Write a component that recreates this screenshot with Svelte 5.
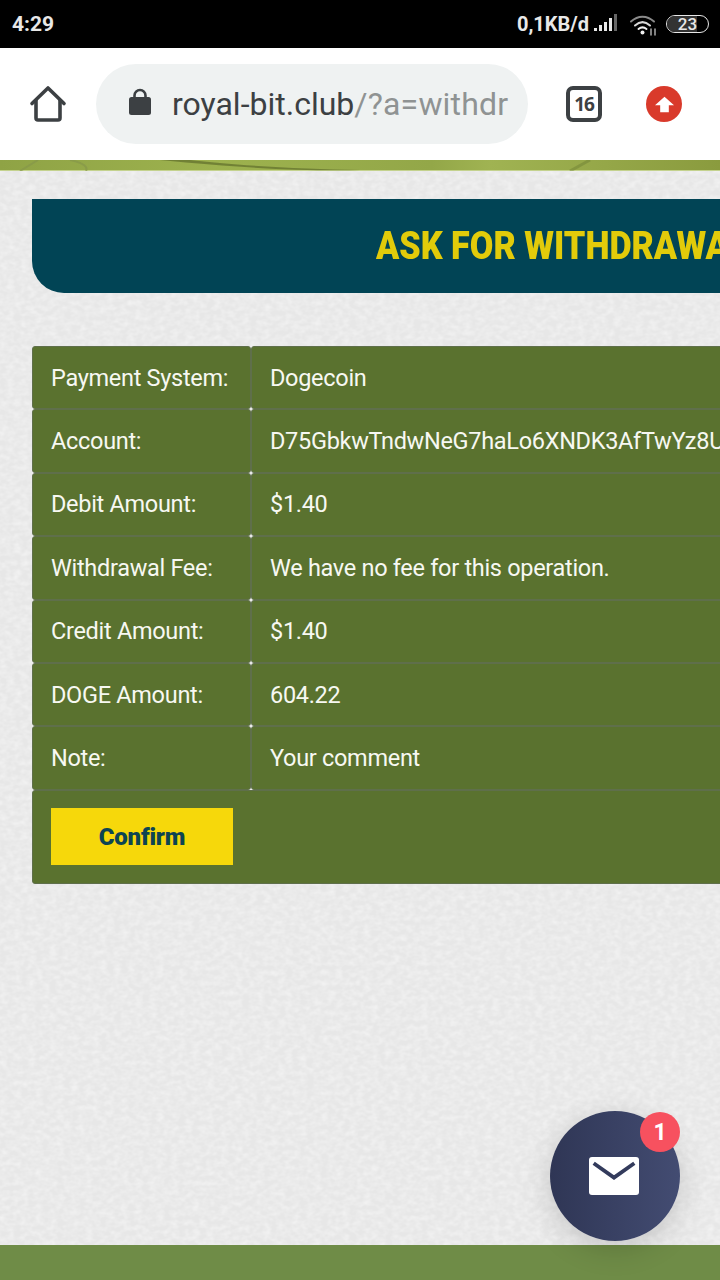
<script>
  const rows = [
    ['Payment System:', 'Dogecoin'],
    ['Account:', 'D75GbkwTndwNeG7haLo6XNDK3AfTwYz8UjR4'],
    ['Debit Amount:', '$1.40'],
    ['Withdrawal Fee:', 'We have no fee for this operation.'],
    ['Credit Amount:', '$1.40'],
    ['DOGE Amount:', '604.22'],
    ['Note:', 'Your comment']
  ];
</script>

<div class="screen">
  <div class="statusbar">
    <span class="time">4:29</span>
    <div class="status-right">
      <span class="speed">0,1KB/d</span>
      <svg class="signal" width="26" height="20" viewBox="0 0 26 20">
        <rect x="1" y="15" width="3" height="3" fill="#e8e8e8" />
        <rect x="6" y="12" width="3" height="6" fill="#e8e8e8" />
        <rect x="11" y="9" width="3" height="9" fill="#e8e8e8" />
        <rect x="16" y="5" width="3" height="13" fill="#e8e8e8" />
        <rect x="21" y="1" width="3" height="17" fill="#666" />
      </svg>
      <svg class="wifi" width="28" height="22" viewBox="0 0 28 22" fill="none" stroke-linecap="round">
        <path d="M2 7.5C9 1 18 1 25 7.5" stroke="#8a8a8a" stroke-width="2" />
        <path d="M6 11.5C11 7 16 7 21 11.5" stroke="#d8d8d8" stroke-width="2" />
        <path d="M9.5 15C12 13 15 13 17.5 15" stroke="#f0f0f0" stroke-width="2" />
        <circle cx="13.5" cy="18.5" r="2" fill="#f0f0f0" />
        <path d="M22 15v6M26 15v6" stroke="#aaa" stroke-width="1.5" />
      </svg>
      <div class="battery">
        <div class="battery-fill"></div>
        <span>23</span>
      </div>
    </div>
  </div>

  <div class="toolbar">
    <svg class="home" width="38" height="38" viewBox="0 0 38 38" fill="none" stroke="#3c4043" stroke-width="3.6" stroke-linejoin="round" stroke-linecap="round">
      <path d="M3 18.5 19 3l16 15.5" />
      <path d="M7 15.5V33a2 2 0 0 0 2 2h20a2 2 0 0 0 2-2V15.5" />
    </svg>
    <div class="omnibox">
      <svg width="24" height="30" viewBox="0 0 24 30">
        <path d="M6.5 11V8.5a5.5 5.5 0 0 1 11 0V11" fill="none" stroke="#3c4043" stroke-width="2.6" />
        <rect x="1" y="10" width="22" height="18" rx="2.5" fill="#3c4043" />
      </svg>
      <div class="url"><span class="host">royal-bit.club</span><span class="path">/?a=withdr</span></div>
    </div>
    <div class="tabs">16</div>
    <div class="upgrade">
      <svg width="24" height="22" viewBox="0 0 24 22">
        <path d="M12 2 23 12H17V20H7V12H1Z" fill="#fff" />
      </svg>
    </div>
  </div>

  <div class="strip">
    <svg width="720" height="11" viewBox="0 0 720 11" fill="none">
      <path d="M160 0C240 8 300 11 360 10 300 9 230 5 190 0Z" fill="#66762f" opacity="0.8" />
      <path d="M20 11 38 0M70 0C84 3 88 7 86 11" stroke="#86974a" stroke-width="2" opacity="0.7" />
      <path d="M570 11 590 0" stroke="#66772f" stroke-width="3" opacity="0.4" />
    </svg>
  </div>

  <main class="content">
    <svg class="paper" width="720" height="1074">
      <filter id="paper-noise">
        <feTurbulence type="fractalNoise" baseFrequency="0.14 0.2" numOctaves="2" seed="4" />
        <feColorMatrix values="0 0 0 0 1  0 0 0 0 1  0 0 0 0 1  0.8 0 0 0 -0.27" />
      </filter>
      <rect width="720" height="1074" filter="url(#paper-noise)" />
    </svg>

    <div class="heading"><h1>ASK FOR WITHDRAWAL</h1></div>

    <div class="table">
      {#each rows as [label, value]}
        <div class="row">
          <div class="cell label">{label}</div>
          <div class="cell value">{value}</div>
        </div>
      {/each}
      <div class="cell submit">
        <button>Confirm</button>
      </div>
    </div>
  </main>

  <footer class="footer"></footer>

  <div class="chat">
    <svg width="50" height="38" viewBox="0 0 50 38">
      <rect width="50" height="38" rx="3" fill="#fff" />
      <path d="M4.7 6.3 25 20.6 45.3 6.3" fill="none" stroke="#333b5c" stroke-width="3.8" />
    </svg>
    <span class="badge">1</span>
  </div>
</div>

<style>
  :global(body) {
    margin: 0;
    background: #e6e6e6;
  }
  .screen {
    position: relative;
    width: 720px;
    height: 1280px;
    overflow: hidden;
    display: flex;
    flex-direction: column;
    font-family: Roboto, sans-serif;
  }
  .statusbar {
    height: 48px;
    flex: none;
    background: #000;
    color: #e8e8e8;
    display: flex;
    align-items: center;
    justify-content: space-between;
    padding: 0 11px 0 12px;
    font-weight: 700;
  }
  .time { font-size: 21px; }
  .status-right {
    display: flex;
    align-items: center;
    gap: 5px;
  }
  .speed { font-size: 20px; margin-right: -1px; }
  .signal { margin-top: -2px; }
  .wifi { margin-left: 5px; margin-top: 2px; }
  .battery {
    position: relative;
    width: 41px;
    height: 16px;
    border: 1.5px solid #e8e8e8;
    border-radius: 9px;
    margin-left: 4px;
    overflow: hidden;
    display: flex;
    align-items: center;
    justify-content: center;
    font-size: 17px;
    font-weight: 500;
  }
  .battery span { position: relative; }
  .battery-fill {
    position: absolute;
    left: 0;
    top: 0;
    bottom: 0;
    width: 30px;
    background: #333;
  }

  .toolbar {
    height: 112px;
    flex: none;
    background: #fff;
    display: flex;
    align-items: center;
    padding-left: 29px;
    box-sizing: border-box;
  }
  .home { flex: none; margin-right: 29px; margin-top: -1px; }
  .omnibox {
    width: 432px;
    height: 80px;
    flex: none;
    border-radius: 40px;
    background: #eff2f2;
    display: flex;
    align-items: center;
    padding: 0 20px 0 32px;
    box-sizing: border-box;
    gap: 20px;
  }
  .omnibox svg { flex: none; margin-top: -4px; }
  .url {
    white-space: nowrap;
    font-size: 32px;
    font-weight: 400;
  }
  .host { color: #3c4043; }
  .path { color: #8f9393; letter-spacing: 0.2px; }
  .tabs {
    width: 36px;
    height: 36px;
    flex: none;
    box-sizing: border-box;
    margin-left: 38px;
    border: 4px solid #3c4043;
    border-radius: 7px;
    color: #3c4043;
    font-family: "Open Sans", sans-serif;
    font-weight: 700;
    font-size: 19px;
    letter-spacing: -1px;
    display: flex;
    align-items: center;
    justify-content: center;
  }
  .upgrade {
    width: 36px;
    height: 36px;
    flex: none;
    margin-left: 44px;
    border-radius: 50%;
    background: #d93a2b;
    display: flex;
    align-items: center;
    justify-content: center;
  }
  .upgrade svg { width: 21px; height: 19px; }

  .strip {
    height: 11px;
    flex: none;
    background: linear-gradient(90deg, #8fa345, #9db24e 30%, #93a748 60%, #a0b352 68%, #8a9b3e 100%);
    border-bottom: 1px solid #c4d28e;
    box-sizing: border-box;
  }
  .strip svg { display: block; }

  .content {
    position: relative;
    flex: 1;
    min-height: 0;
    padding: 28px 0 0 32px;
    background-color: #e7e7e7;
  }
  .paper {
    position: absolute;
    left: 0;
    top: 0;
  }
  .heading {
    position: relative;
    width: 1000px;
    height: 94px;
    box-sizing: border-box;
    background: #014455;
    border-bottom-left-radius: 32px;
    display: flex;
    align-items: center;
    padding-left: 344px;
  }
  h1 {
    margin: 0;
    font-size: 38px;
    font-weight: 900;
    color: #e2cb0a;
    white-space: nowrap;
    transform: scaleX(0.9);
    transform-origin: left center;
  }

  .table {
    position: relative;
    width: 1000px;
    margin-top: 53px;
    display: flex;
    flex-direction: column;
  }
  .row {
    display: flex;
    height: 63.4px;
  }
  .cell {
    box-sizing: border-box;
    background: #5a722f;
    color: #f7f8f2;
    font-size: 23.5px;
    letter-spacing: -0.3px;
    display: flex;
    align-items: center;
    white-space: nowrap;
    border-radius: 3px;
    border: 1px solid #5f6f4b;
    padding-left: 18px;
  }
  .label {
    width: 219px;
    flex: none;
  }
  .value {
    flex: 1;
  }
  .submit {
    height: 94px;
  }
  button {
    width: 182px;
    height: 57px;
    border: none;
    background: #f6d80b;
    color: #0d4452;
    font-family: Roboto, sans-serif;
    font-weight: 900;
    font-size: 24px;
    letter-spacing: -0.2px;
  }

  .footer {
    height: 35px;
    flex: none;
    background: #6f8c47;
  }

  .chat {
    position: absolute;
    left: 550px;
    top: 1111px;
    width: 130px;
    height: 130px;
    border-radius: 50%;
    background: linear-gradient(90deg, #2f3655, #434c72);
    box-shadow: 0 8px 30px rgba(0, 0, 0, 0.16);
    display: flex;
    align-items: center;
    justify-content: center;
  }
  .chat svg { margin-top: -1px; margin-left: -2px; }
  .badge {
    position: absolute;
    right: 0;
    top: 1px;
    width: 40px;
    height: 40px;
    border-radius: 50%;
    background: #f7515f;
    color: #fff;
    font-weight: 700;
    font-size: 23px;
    display: flex;
    align-items: center;
    justify-content: center;
  }
</style>
